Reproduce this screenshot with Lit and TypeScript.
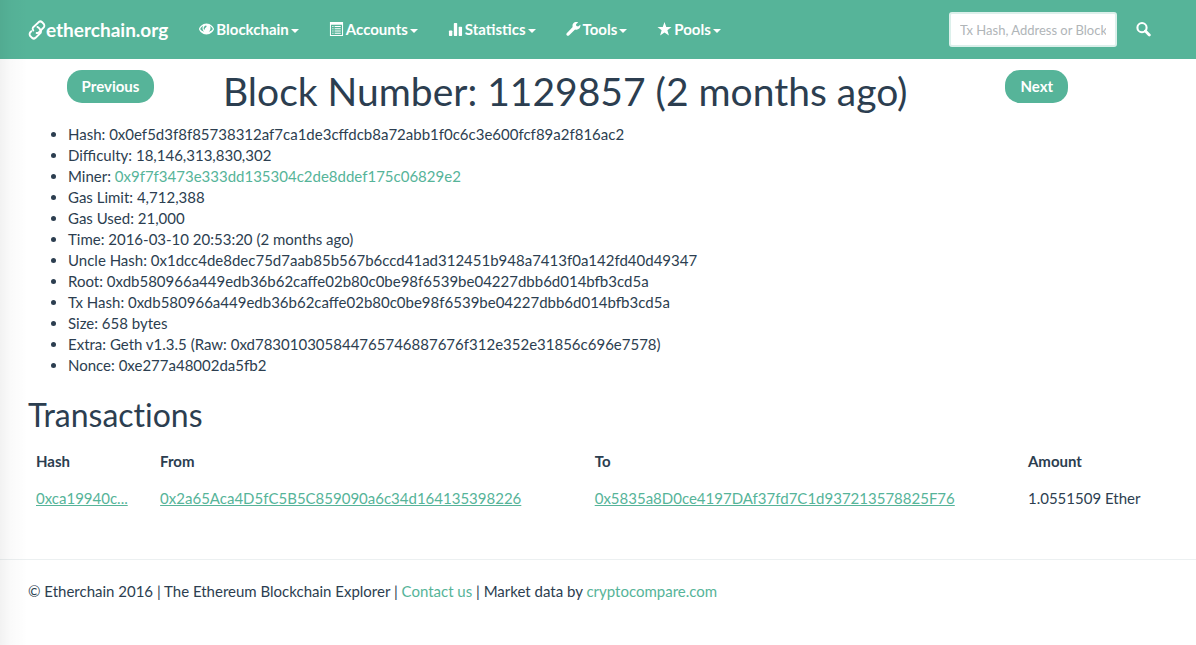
import { LitElement, html, css, svg } from "lit";
import { customElement } from "lit/decorators.js";

const icons = {
  link: svg`<svg class="brand-icon" viewBox="0.8 0.8 22.4 22.4" preserveAspectRatio="none" fill="none" stroke="currentColor" stroke-width="2.3" stroke-linejoin="round" stroke-linecap="round" aria-hidden="true">
    <path d="M11.500 15.400 Q13.200 15.600 14.500 14.400 L20.600 9 A3.400 3.400 0 0 0 20.700 5.600 L18.200 3.100 A3.400 3.400 0 0 0 14.300 3 L7 9.300 A2.800 2.800 0 0 0 7.300 12.400"/>
    <path d="M12.500 8.600 Q13.500 8.800 14.300 9.600 L16.400 12 A2.800 2.800 0 0 1 16.600 15 L10 20.900 A3.400 3.400 0 0 1 6 20.900 L3.300 18.400 A3.400 3.400 0 0 1 3.400 14.900 L5 13.400"/></svg>`,
  eye: svg`<svg viewBox="0 0 16 16" aria-hidden="true"><path fill="currentColor" fill-rule="evenodd" d="M8 1.700C3.600 1.700 .5 5.100 0 7.500c.5 2.400 3.600 5.800 8 5.800s7.500-3.400 8-5.800C15.500 5.100 12.400 1.700 8 1.700zM4.300 4.100C3.300 6.200 3.500 8.800 5.600 10.500 3.700 10 2 8.800 1.300 7.500c.6-1.300 1.700-2.600 3-3.400zM11.700 4.100c1.300.8 2.400 2.100 3 3.400-.7 1.300-2.400 2.500-4.300 3 2.100-1.700 2.300-4.300 1.300-6.400zM7.300 3.800c1.100.2 1 1.300.2 1.900-.9.600-1.200 1.200-1.300 2-.1.700-1 .6-1.200-.2-.2-1.800.7-3.400 2.300-3.700z"/></svg>`,
  list: svg`<svg viewBox="0 0 16 16" aria-hidden="true"><path fill="currentColor" fill-rule="evenodd" d="M1 0h14v15H1zM2.100 3v10.900h11.800V3z"/><path fill="currentColor" d="M3.500 4.200h1.300v1.200H3.500zM6 4.200h6.500v1.200H6zM3.500 6.600h1.300v1.200H3.500zM6 6.600h6.500v1.200H6zM3.500 9h1.300v1.200H3.500zM6 9h6.500v1.200H6zM3.500 11.400h1.300v1.200H3.500zM6 11.400h6.500v1.200H6z"/></svg>`,
  stats: svg`<svg viewBox="0 0 16 16" fill="currentColor" aria-hidden="true"><rect x="1" y="9" width="3.600" height="6" rx=".8"/><rect x="6.200" y="1" width="3.600" height="14" rx=".8"/><rect x="11.400" y="5" width="3.600" height="10" rx=".8"/></svg>`,
  wrench: svg`<svg viewBox="0 0 16 16" aria-hidden="true"><path fill="currentColor" d="M15.300 2.800 12.900 4.700 11 4.300 10.700 2.500 13 .3C11.200-.3 9 0 7.700 1.500 6.800 2.700 6.800 4 7.100 5.300L.8 12c-.6.7-.6 1.500 0 2.200.7.700 1.600.7 2.300.1L9.700 7.900c1.500.5 3.200.3 4.400-.9 1.100-1.100 1.500-2.700 1.200-4.200z"/></svg>`,
  star: svg`<svg viewBox="0 0 16 16" aria-hidden="true"><path fill="currentColor" d="M8 0l1.900 5.300 5.600.1-4.400 3.500 1.600 5.500L8 11.200l-4.700 3.200 1.600-5.500L.5 5.400l5.600-.1z"/></svg>`,
  search: svg`<svg viewBox="0 0 16 16" fill="none" stroke="currentColor" aria-hidden="true"><circle cx="6.400" cy="6" r="4.900" stroke-width="2.200"/><path d="M10 9.600l4.200 4.200" stroke-width="3" stroke-linecap="round"/></svg>`,
};

const menus = [
  { label: "Blockchain", icon: icons.eye },
  { label: "Accounts", icon: icons.list },
  { label: "Statistics", icon: icons.stats },
  { label: "Tools", icon: icons.wrench },
  { label: "Pools", icon: icons.star },
];

const facts: { label: string; value: string; link?: boolean }[] = [
  { label: "Hash", value: "0x0ef5d3f8f85738312af7ca1de3cffdcb8a72abb1f0c6c3e600fcf89a2f816ac2" },
  { label: "Difficulty", value: "18,146,313,830,302" },
  { label: "Miner", value: "0x9f7f3473e333dd135304c2de8ddef175c06829e2", link: true },
  { label: "Gas Limit", value: "4,712,388" },
  { label: "Gas Used", value: "21,000" },
  { label: "Time", value: "2016-03-10 20:53:20 (2 months ago)" },
  { label: "Uncle Hash", value: "0x1dcc4de8dec75d7aab85b567b6ccd41ad312451b948a7413f0a142fd40d49347" },
  { label: "Root", value: "0xdb580966a449edb36b62caffe02b80c0be98f6539be04227dbb6d014bfb3cd5a" },
  { label: "Tx Hash", value: "0xdb580966a449edb36b62caffe02b80c0be98f6539be04227dbb6d014bfb3cd5a" },
  { label: "Size", value: "658 bytes" },
  { label: "Extra", value: "Geth v1.3.5 (Raw: 0xd783010305844765746887676f312e352e31856c696e7578)" },
  { label: "Nonce", value: "0xe277a48002da5fb2" },
];

const transactions = [
  {
    hash: "0xca19940c...",
    from: "0x2a65Aca4D5fC5B5C859090a6c34d164135398226",
    to: "0x5835a8D0ce4197DAf37fd7C1d937213578825F76",
    amount: "1.0551509 Ether",
  },
];

@customElement("app-root")
export class AppRoot extends LitElement {
  static styles = css`
    :host {
      display: block;
      position: relative;
      min-height: 100vh;
      background: #fff;
      color: #2c3e50;
      font: 15px/21px Lato, sans-serif;
    }
    :host::before {
      content: "";
      position: absolute;
      inset: 0 auto 0 0;
      width: 28px;
      background: linear-gradient(to right, rgba(0, 0, 0, 0.05), rgba(0, 0, 0, 0.02) 40%, rgba(0, 0, 0, 0));
      pointer-events: none;
    }
    * { box-sizing: border-box; }
    a { color: #56b499; text-decoration: none; }
    .container {
      max-width: 1170px;
      margin: 0 auto;
      padding: 0 15px;
    }
    .navbar { background: #56b499; color: #fff; }
    .bar { display: flex; align-items: center; min-height: 59px; }
    .brand {
      display: flex;
      align-items: center;
      color: #fff;
      font-size: 19px;
      font-weight: 700;
      margin-right: 16px;
    }
    .brand-icon { width: 18px; height: 20px; }
    .menus { display: flex; list-style: none; margin: 0; padding: 0; }
    .menu, .search-button {
      display: flex;
      align-items: center;
      border: 0;
      background: none;
      color: #fff;
      font: inherit;
      font-weight: 700;
      padding: 19px 15px;
      cursor: pointer;
    }
    .menu svg, .search-button svg { width: 15px; height: 15px; }
    .menu svg { margin-right: 2px; }
    .caret {
      border: 4px solid transparent;
      border-top-color: currentColor;
      border-bottom: 0;
      margin: 2px 0 0 2px;
    }
    .search { display: flex; align-items: center; margin-left: auto; }
    .search-input {
      width: 168px;
      height: 35px;
      border: 2px solid #dcf0eb;
      border-radius: 3px;
      background: #fff;
      color: #2c3e50;
      font: 13px/18px Lato, sans-serif;
      padding: 6px 9px;
    }
    .search-input::placeholder { color: #b0b5b8; opacity: 1; }
    .search-button { padding: 19px; margin-right: -2px; }
    .heading {
      display: grid;
      grid-template-columns: 2fr 8fr 1fr 1fr;
      align-items: start;
      margin: 11px -15px 11px;
    }
    .pager { justify-self: center; }
    .pager-link {
      display: block;
      background: #56b499;
      color: #fff;
      font-weight: 700;
      border-radius: 15px;
      padding: 6px 15px;
    }
    h1, h2 { font-weight: 400; margin: 0; }
    h1 { font-size: 39px; line-height: 43px; padding: 0 15px; }
    h2 { font-size: 32px; line-height: 35px; margin: 21px 0 11px; font-variant-ligatures: none; }
    .facts { margin: 0; padding-left: 40px; overflow-wrap: anywhere; }
    table { width: 100%; border-collapse: collapse; margin-bottom: 42px; }
    th, td { padding: 8px; text-align: left; }
    td a { text-decoration: underline; }
    footer { border-top: 1px solid #ecf0f1; padding: 21px 0; }
  `;

  render() {
    return html`
      <header class="navbar">
        <div class="container bar">
          <a class="brand" href="#">${icons.link}<span>etherchain.org</span></a>
          <nav>
            <ul class="menus">
              ${menus.map(
                (m) => html`<li>
                  <button class="menu" type="button" aria-haspopup="true">${m.icon}<span>${m.label}</span><span class="caret"></span></button>
                </li>`
              )}
            </ul>
          </nav>
          <form class="search" role="search">
            <input class="search-input" type="text" aria-label="Search" placeholder="Tx Hash, Address or Block" />
            <button class="search-button" type="submit" aria-label="Submit search">${icons.search}</button>
          </form>
        </div>
      </header>
      <main class="container">
        <div class="heading">
          <div class="pager"><a class="pager-link" href="#">Previous</a></div>
          <h1>Block Number: 1129857 (2 months ago)</h1>
          <div class="pager"><a class="pager-link" href="#">Next</a></div>
        </div>
        <ul class="facts">
          ${facts.map((f) => html`<li>${f.label}: ${f.link ? html`<a href="#">${f.value}</a>` : f.value}</li>`)}
        </ul>
        <h2>Transactions</h2>
        <table>
          <thead>
            <tr><th>Hash</th><th>From</th><th>To</th><th>Amount</th></tr>
          </thead>
          <tbody>
            ${transactions.map(
              (t) => html`<tr>
                <td><a href="#">${t.hash}</a></td>
                <td><a href="#">${t.from}</a></td>
                <td><a href="#">${t.to}</a></td>
                <td>${t.amount}</td>
              </tr>`
            )}
          </tbody>
        </table>
      </main>
      <footer>
        <div class="container">
          © Etherchain 2016 | The Ethereum Blockchain Explorer | <a href="#">Contact us</a> | Market data by <a href="#">cryptocompare.com</a>
        </div>
      </footer>
    `;
  }
}
